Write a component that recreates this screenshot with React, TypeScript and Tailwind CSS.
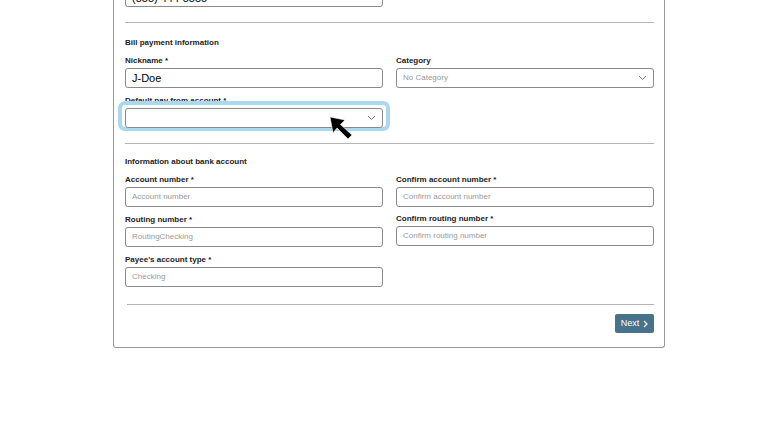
export default function App() {
  const F = { fontFamily: '"Liberation Sans", Arial, sans-serif' };
  const Label = ({ t }: { t: string }) => (
    <div className="text-[8px] font-bold text-[#222] leading-[10px] h-[10px]">{t}</div>
  );
  const Input = ({ ph, val, chev }: { ph?: string; val?: string; chev?: boolean }) => (
    <div className="h-[20px] border border-[#8a8a8a] rounded-[3px] bg-white flex items-center px-[6px] justify-between">
      {val ? <span className="text-[11px] text-black">{val}</span> : <span className="text-[8px] text-[#9a9a9a]">{ph}</span>}
      {chev && (
        <svg width="9" height="6" viewBox="0 0 9 6"><path d="M1 1l3.5 3.5L8 1" fill="none" stroke="#777" strokeWidth="1" /></svg>
      )}
    </div>
  );
  return (
    <div className="w-[768px] h-[432px] bg-white overflow-hidden relative" style={F}>
      <div className="absolute left-[113px] top-[-20px] w-[552px] h-[368px] border border-[#9a9a9a] border-t-0 rounded-b-[3px] pl-[11px] pr-[10px] flex flex-col">
        <div className="w-[258px] h-[27px] border border-[#8a8a8a] rounded-[3px] flex items-end px-[6px] pb-[2px]">
          <span className="text-[11px] text-black leading-[11px]">(555) 444-5555</span>
        </div>
        <div className="h-px bg-[#b5b5b5] mt-[15px]" />
        <div className="mt-[15px] text-[8px] font-bold text-[#222] leading-[10px]">Bill payment information</div>
        <div className="grid grid-cols-2 gap-x-[13px] mt-[8px]">
          <div className="flex flex-col gap-[2px]"><Label t="Nickname  *" /><Input val="J-Doe" /></div>
          <div className="flex flex-col gap-[2px]"><Label t="Category" /><Input ph="No Category" chev /></div>
        </div>
        <div className="grid grid-cols-2 gap-x-[13px] mt-[8px]">
          <div className="flex flex-col gap-[2px] relative">
            <Label t="Default pay from account  *" />
            <div className="absolute left-[-7px] right-[-7px] top-[5px] h-[30px] rounded-[7px] border-[4px] border-[#a9d8ef]" />
            <div className="relative"><Input chev /></div>
          </div>
        </div>
        <div className="h-px bg-[#b5b5b5] mt-[15px]" />
        <div className="mt-[13px] text-[8px] font-bold text-[#222] leading-[10px]">Information about bank account</div>
        <div className="grid grid-cols-2 gap-x-[13px] mt-[8px]">
          <div className="flex flex-col gap-[2px]"><Label t="Account number  *" /><Input ph="Account number" /></div>
          <div className="flex flex-col gap-[2px]"><Label t="Confirm account number  *" /><Input ph="Confirm account number" /></div>
        </div>
        <div className="grid grid-cols-2 gap-x-[13px] mt-[8px]">
          <div className="flex flex-col gap-[2px]"><Label t="Routing number  *" /><Input ph="RoutingChecking" /></div>
          <div className="flex flex-col gap-[2px] -mt-px"><Label t="Confirm routing number  *" /><Input ph="Confirm routing number" /></div>
        </div>
        <div className="grid grid-cols-2 gap-x-[13px] mt-[8px]">
          <div className="flex flex-col gap-[2px]"><Label t="Payee's account type  *" /><Input ph="Checking" /></div>
        </div>
        <div className="h-px bg-[#b5b5b5] mt-[17px] ml-[2px]" />
        <div className="flex justify-end mt-[9px]">
          <div className="w-[39px] h-[19px] bg-[#46728c] rounded-[2px] flex items-center justify-center gap-[4px] text-white text-[9px]">
            Next
            <svg width="5" height="8" viewBox="0 0 5 8"><path d="M1 1l3 3-3 3" fill="none" stroke="white" strokeWidth="1.2" /></svg>
          </div>
        </div>
      </div>
      <svg className="absolute left-[329px] top-[116px]" width="25" height="24" viewBox="0 0 25 24">
        <path d="M1 1 L16 4 L11.5 8.5 L23 19 L19 23 L8 12 L4 17 Z" fill="black" stroke="white" strokeWidth="0.6" strokeLinejoin="round" />
      </svg>
    </div>
  );
}
